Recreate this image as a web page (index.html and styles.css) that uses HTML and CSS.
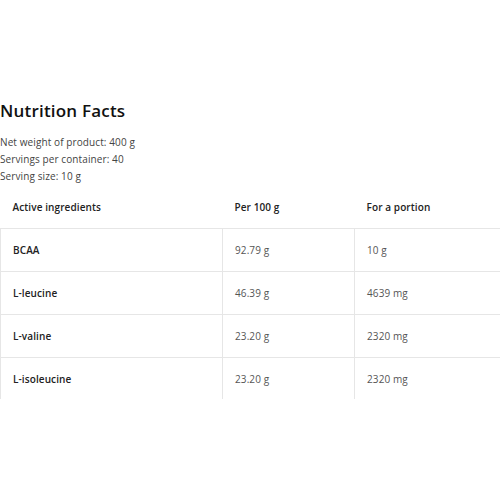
FILE: index.html
```html
<!DOCTYPE html>
<html>
<head>
<meta charset="utf-8">
<link rel="stylesheet" href="styles.css">
</head>
<body>
<div class="page">
  <h2 class="title">Nutrition Facts</h2>
  <div class="meta">
    <p>Net weight of product: 400 g</p>
    <p>Servings per container: 40</p>
    <p>Serving size: 10 g</p>
  </div>
  <div class="table-wrap">
    <table class="facts">
      <thead>
        <tr><th class="c1">Active ingredients</th><th class="c2">Per 100 g</th><th class="c3">For a portion</th></tr>
      </thead>
      <tbody>
        <tr><td class="name">BCAA</td><td>92.79 g</td><td>10 g</td></tr>
        <tr><td class="name">L-leucine</td><td>46.39 g</td><td>4639 mg</td></tr>
        <tr><td class="name">L-valine</td><td>23.20 g</td><td>2320 mg</td></tr>
        <tr><td class="name">L-isoleucine</td><td>23.20 g</td><td>2320 mg</td></tr>
      </tbody>
    </table>
  </div>
</div>
</body>
</html>
```
FILE: styles.css
```css
html, body { margin: 0; padding: 0; background: #fff; }
body { font-family: "Open Sans", "Liberation Sans", sans-serif; color: #222; }
.page { padding-top: 97px; }
.title { margin: 0; font-size: 17px; line-height: 28px; font-weight: 600; color: #111; letter-spacing: 0.2px; }
.meta { margin-top: 9px; }
.meta p { margin: 0; font-size: 10px; line-height: 17px; color: #444; letter-spacing: 0.1px; }
.table-wrap { margin-top: 1px; height: 213px; overflow: hidden; }
.facts { width: 100%; border-collapse: collapse; table-layout: fixed; font-size: 10px; letter-spacing: 0.1px; }
.facts th { text-align: left; font-weight: 600; color: #222; height: 42px; padding: 0 0 0 12px; border-bottom: 1px solid #e6e6e6; }
.facts th.c1 { width: 210px; }
.facts th.c2 { width: 120px; }
.facts td { height: 42px; padding: 0 0 0 12px; border: 1px solid #e6e6e6; color: #555; }
.facts td:last-child { border-right: none; }
.facts td.name { font-weight: 600; color: #222; }
```
